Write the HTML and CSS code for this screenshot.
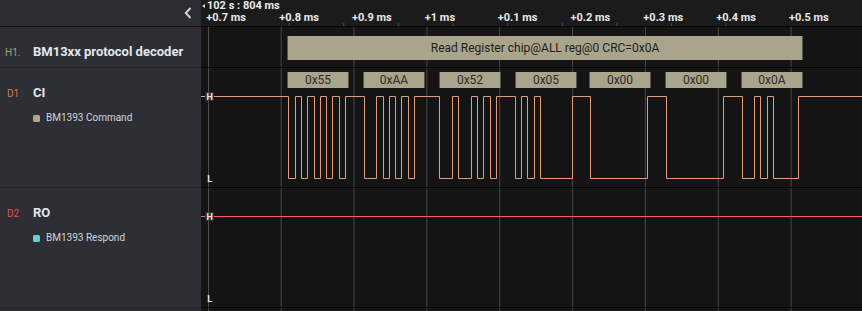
FILE: index.html
```html
<!DOCTYPE html>
<html>
<head>
<meta charset="utf-8">
<link rel="stylesheet" href="styles.css">
</head>
<body>
<div class="app">
  <div class="hl">
    <svg class="chev" width="8" height="12" viewBox="0 0 8 12"><polyline points="6.5,1 1.8,6 6.5,11"/></svg>
  </div>
  <div class="hr">
    <div class="stamp"><span class="tri"></span>102 s : 804 ms</div>
    <div class="ticks">
      <span>+0.7 ms</span><span>+0.8 ms</span><span>+0.9 ms</span><span>+1 ms</span><span>+0.1 ms</span><span>+0.2 ms</span><span>+0.3 ms</span><span>+0.4 ms</span><span>+0.5 ms</span><span>+0.6 ms</span>
    </div>
    <svg class="tickmarks" width="661" height="4" viewBox="201 0 661 4">
      <g class="tm">
        <line x1="208.5" y1="0" x2="208.5" y2="4"/><line x1="281.2" y1="0" x2="281.2" y2="4"/><line x1="354" y1="0" x2="354" y2="4"/><line x1="426.9" y1="0" x2="426.9" y2="4"/><line x1="499.7" y1="0" x2="499.7" y2="4"/><line x1="572.6" y1="0" x2="572.6" y2="4"/><line x1="645.4" y1="0" x2="645.4" y2="4"/><line x1="718.3" y1="0" x2="718.3" y2="4"/><line x1="791.1" y1="0" x2="791.1" y2="4"/>
      </g>
    </svg>
  </div>

  <div class="lbl">
    <span class="tag tag-h">H1.</span>
    <div class="info"><span class="name">BM13xx protocol decoder</span></div>
  </div>
  <div class="plot">
    <svg width="661" height="40" viewBox="201 0 661 40">
      <g class="grid">
        <line class="axis" x1="208.5" y1="0" x2="208.5" y2="40"/><line x1="281.2" y1="0" x2="281.2" y2="40"/><line x1="354" y1="0" x2="354" y2="40"/><line x1="426.9" y1="0" x2="426.9" y2="40"/><line x1="499.7" y1="0" x2="499.7" y2="40"/><line x1="572.6" y1="0" x2="572.6" y2="40"/><line x1="645.4" y1="0" x2="645.4" y2="40"/><line x1="718.3" y1="0" x2="718.3" y2="40"/><line x1="791.1" y1="0" x2="791.1" y2="40"/>
      </g>
      <rect class="box" x="287" y="9" width="516" height="24"/>
      <line class="edge" x1="287.5" y1="9" x2="287.5" y2="33"/>
      <line class="edge" x1="802.5" y1="9" x2="802.5" y2="33"/>
      <text class="boxtext" x="545" y="25">Read Register chip@ALL reg@0 CRC=0x0A</text>
    </svg>
  </div>

  <div class="lbl">
    <span class="tag tag-d1">D1</span>
    <div class="info">
      <span class="name">CI</span>
      <span class="sub"><i class="dot dot-cmd"></i>BM1393 Command</span>
    </div>
  </div>
  <div class="plot">
    <svg width="661" height="119" viewBox="201 0 661 119">
      <g class="grid">
        <line class="axis" x1="208.5" y1="0" x2="208.5" y2="119"/><line x1="281.2" y1="0" x2="281.2" y2="119"/><line x1="354" y1="0" x2="354" y2="119"/><line x1="426.9" y1="0" x2="426.9" y2="119"/><line x1="499.7" y1="0" x2="499.7" y2="119"/><line x1="572.6" y1="0" x2="572.6" y2="119"/><line x1="645.4" y1="0" x2="645.4" y2="119"/><line x1="718.3" y1="0" x2="718.3" y2="119"/><line x1="791.1" y1="0" x2="791.1" y2="119"/>
      </g>
      <g class="bytes">
        <rect class="box" x="287" y="4" width="62" height="16"/><line class="edge" x1="287.5" y1="4" x2="287.5" y2="20"/><line class="edge" x1="348.5" y1="4" x2="348.5" y2="20"/>
        <text class="bytetext" x="318" y="15.5">0x55</text>
        <rect class="box" x="363" y="4" width="62" height="16"/><line class="edge" x1="363.5" y1="4" x2="363.5" y2="20"/><line class="edge" x1="424.5" y1="4" x2="424.5" y2="20"/>
        <text class="bytetext" x="394" y="15.5">0xAA</text>
        <rect class="box" x="439" y="4" width="62" height="16"/><line class="edge" x1="439.5" y1="4" x2="439.5" y2="20"/><line class="edge" x1="500.5" y1="4" x2="500.5" y2="20"/>
        <text class="bytetext" x="470" y="15.5">0x52</text>
        <rect class="box" x="515" y="4" width="62" height="16"/><line class="edge" x1="515.5" y1="4" x2="515.5" y2="20"/><line class="edge" x1="576.5" y1="4" x2="576.5" y2="20"/>
        <text class="bytetext" x="546" y="15.5">0x05</text>
        <rect class="box" x="589" y="4" width="62" height="16"/><line class="edge" x1="589.5" y1="4" x2="589.5" y2="20"/><line class="edge" x1="650.5" y1="4" x2="650.5" y2="20"/>
        <text class="bytetext" x="620" y="15.5">0x00</text>
        <rect class="box" x="665" y="4" width="62" height="16"/><line class="edge" x1="665.5" y1="4" x2="665.5" y2="20"/><line class="edge" x1="726.5" y1="4" x2="726.5" y2="20"/>
        <text class="bytetext" x="696" y="15.5">0x00</text>
        <rect class="box" x="741" y="4" width="62" height="16"/><line class="edge" x1="741.5" y1="4" x2="741.5" y2="20"/><line class="edge" x1="802.5" y1="4" x2="802.5" y2="20"/>
        <text class="bytetext" x="772" y="15.5">0x0A</text>
      </g>
      <path class="wave wave-ci" d="M201 28.5 H288.5 V110.5 H295.5 V28.5 H301.5 V110.5 H307.5 V28.5 H314.5 V110.5 H320.5 V28.5 H326.5 V110.5 H332.5 V28.5 H339.5 V110.5 H345.5 V28.5 H364.5 V110.5 H376.5 V28.5 H383.5 V110.5 H389.5 V28.5 H395.5 V110.5 H401.5 V28.5 H408.5 V110.5 H414.5 V28.5 H439.5 V110.5 H452.5 V28.5 H458.5 V110.5 H471.5 V28.5 H477.5 V110.5 H483.5 V28.5 H490.5 V110.5 H496.5 V28.5 H515.5 V110.5 H521.5 V28.5 H527.5 V110.5 H534.5 V28.5 H540.5 V110.5 H572.5 V28.5 H590.5 V110.5 H647.5 V28.5 H666.5 V110.5 H723.5 V28.5 H742.5 V110.5 H754.5 V28.5 H760.5 V110.5 H767.5 V28.5 H773.5 V110.5 H798.5 V28.5 H862"/>
      <rect class="hlbg" x="205" y="24" width="9" height="9"/>
      <text class="hl-text" x="209.8" y="31.5">H</text>
      <text class="hl-text" x="209.8" y="114">L</text>
    </svg>
  </div>

  <div class="lbl">
    <span class="tag tag-d2">D2</span>
    <div class="info">
      <span class="name">RO</span>
      <span class="sub"><i class="dot dot-rsp"></i>BM1393 Respond</span>
    </div>
  </div>
  <div class="plot">
    <svg width="661" height="119" viewBox="201 0 661 119">
      <g class="grid">
        <line class="axis" x1="208.5" y1="0" x2="208.5" y2="119"/><line x1="281.2" y1="0" x2="281.2" y2="119"/><line x1="354" y1="0" x2="354" y2="119"/><line x1="426.9" y1="0" x2="426.9" y2="119"/><line x1="499.7" y1="0" x2="499.7" y2="119"/><line x1="572.6" y1="0" x2="572.6" y2="119"/><line x1="645.4" y1="0" x2="645.4" y2="119"/><line x1="718.3" y1="0" x2="718.3" y2="119"/><line x1="791.1" y1="0" x2="791.1" y2="119"/>
      </g>
      <path class="wave wave-ro" d="M201 28.5 H862"/>
      <rect class="hlbg" x="205" y="24" width="9" height="9"/>
      <text class="hl-text" x="209.8" y="31.5">H</text>
      <text class="hl-text" x="209.8" y="114">L</text>
    </svg>
  </div>

  <div class="foot-l"></div>
  <div class="foot-r">
    <svg width="661" height="3" viewBox="201 0 661 3">
      <g class="grid">
        <line class="axis" x1="208.5" y1="0" x2="208.5" y2="3"/><line x1="281.2" y1="0" x2="281.2" y2="3"/><line x1="354" y1="0" x2="354" y2="3"/><line x1="426.9" y1="0" x2="426.9" y2="3"/><line x1="499.7" y1="0" x2="499.7" y2="3"/><line x1="572.6" y1="0" x2="572.6" y2="3"/><line x1="645.4" y1="0" x2="645.4" y2="3"/><line x1="718.3" y1="0" x2="718.3" y2="3"/><line x1="791.1" y1="0" x2="791.1" y2="3"/>
      </g>
    </svg>
  </div>
</div>
</body>
</html>
```

FILE: styles.css
```css
* { box-sizing: border-box; }
html, body { margin: 0; padding: 0; background: #141414; }
body { width: 862px; height: 311px; overflow: hidden; }

.app {
  display: grid;
  grid-template-columns: 201px 661px;
  grid-template-rows: 27px 41px 120px 120px 3px;
  width: 862px;
  height: 311px;
  overflow: hidden;
  font-family: Roboto, "Liberation Sans", sans-serif;
}

.hl {
  background: #2c2d31;
  border-bottom: 1px solid #111;
  display: flex;
  justify-content: flex-end;
  align-items: center;
  padding-right: 9px;
}
.chev { display: block; }
.chev polyline { fill: none; stroke: #cfd0d2; stroke-width: 2; }

.hr {
  background: #1b1b1b;
  border-bottom: 1px solid #050505;
  overflow: hidden;
  display: flex;
  flex-direction: column;
  color: #e9e9e9;
  font-weight: 700;
  font-size: 11px;
}
.stamp {
  height: 12px;
  line-height: 12px;
  padding-top: 0;
  padding-left: 1px;
  display: flex;
  align-items: center;
  white-space: nowrap;
}
.tri {
  width: 0;
  height: 0;
  border-right: 3px solid #d8d8d8;
  border-top: 2.5px solid transparent;
  border-bottom: 2.5px solid transparent;
  margin-right: 2px;
}
.ticks {
  display: flex;
  height: 11px;
  line-height: 11px;
  padding-left: 5.3px;
  white-space: nowrap;
}
.ticks span { flex: 0 0 72.85px; }
.tickmarks { display: block; }
.tm line { stroke: #5a5a5a; stroke-width: 1; }

.lbl {
  background: #2e2f34;
  border-bottom: 1px solid #26272b;
  display: flex;
  align-items: flex-start;
  padding-top: 17px;
}
.tag {
  width: 33px;
  font-size: 10px;
  line-height: 16px;
  padding-top: 1px;
}
.tag-h { color: #a49d84; padding-left: 5px; }
.tag-d1 { color: #d0784f; padding-left: 7px; }
.tag-d2 { color: #e5505e; padding-left: 7px; }

.info { display: flex; flex-direction: column; }
.name {
  font-size: 13px;
  font-weight: 700;
  line-height: 16px;
  color: #e2e7ef;
  white-space: nowrap;
}
.sub {
  margin-top: 11px;
  font-size: 10px;
  line-height: 12px;
  color: #cfd5de;
  display: flex;
  align-items: center;
  white-space: nowrap;
}
.dot {
  width: 7px;
  height: 7px;
  border-radius: 1.5px;
  margin-right: 6px;
  display: inline-block;
}
.dot-cmd { background: #aea68d; }
.dot-rsp { background: #6ccbc8; }

.plot {
  background: #141414;
  border-bottom: 1px solid #000;
  overflow: hidden;
}
.plot svg, .foot-r svg { display: block; }

.grid line { stroke: #484848; stroke-width: 1; }
.grid line.axis { stroke: #4e4e4e; }

.box { fill: #aaa48d; }
.edge { stroke: #55534c; stroke-width: 1; }
.boxtext {
  font-family: Roboto, "Liberation Sans", sans-serif;
  font-size: 12px;
  fill: #1f1d1a;
  text-anchor: middle;
}
.bytetext {
  font-family: Roboto, "Liberation Sans", sans-serif;
  font-size: 12px;
  fill: #2b2925;
  text-anchor: middle;
}
.wave { fill: none; stroke-width: 1; }
.wave-ci { stroke: #e29c7a; }
.wave-ro { stroke: #ff5a6a; }
.hlbg { fill: #2d2d2d; }
.hl-text {
  font-family: Roboto, "Liberation Sans", sans-serif;
  font-size: 9px;
  font-weight: 700;
  fill: #ececec;
  text-anchor: middle;
}

.foot-l { background: #2a2b2f; }
.foot-r { background: #141414; }
```
